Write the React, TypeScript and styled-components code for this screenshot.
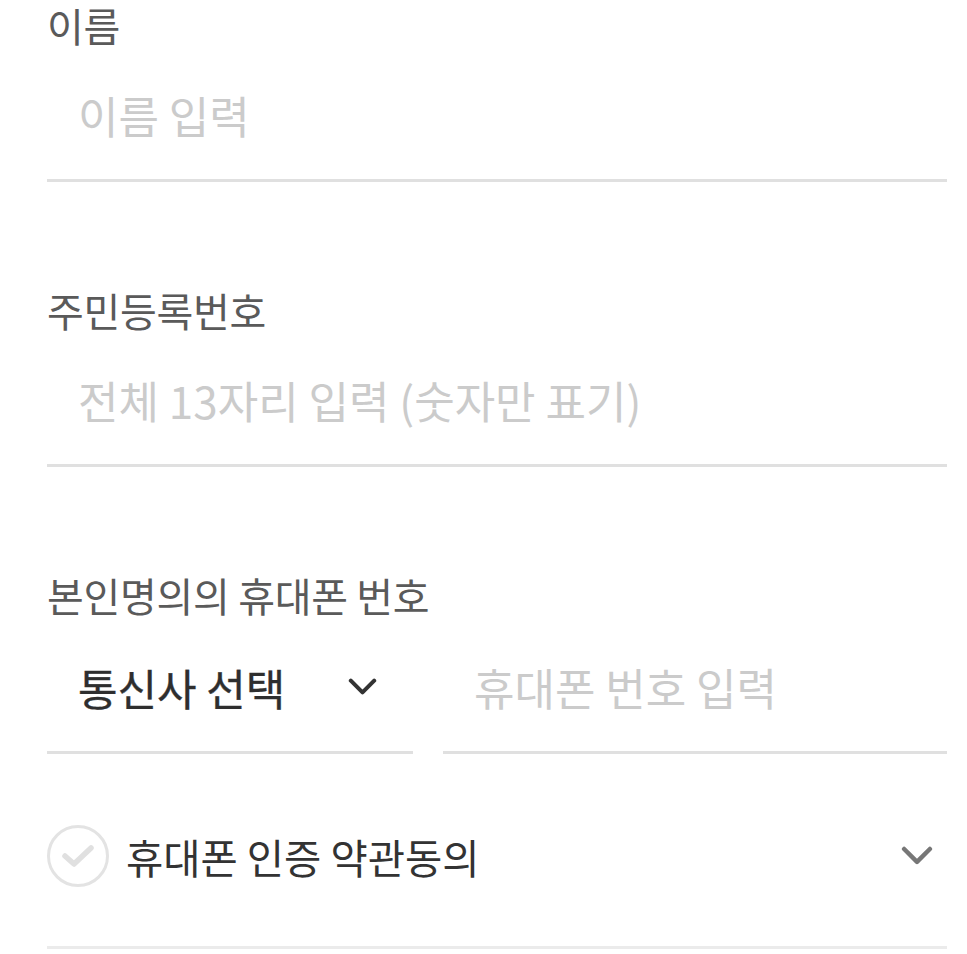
import React from 'react'
import styled, { createGlobalStyle } from 'styled-components'

const GlobalStyle = createGlobalStyle`
  body {
    margin: 0;
    background: #fff;
    font-family: "Noto Sans CJK KR", "Noto Sans", sans-serif;
  }
`

const Form = styled.form`
  padding: 0 20px 0 47px;
`

const Field = styled.div`
  margin-bottom: 103px;
`

const Label = styled.div`
  padding-top: 3px;
  font-size: 40px;
  line-height: 44px;
  color: #5a5a5a;
  letter-spacing: -0.3px;
`

const Underline = styled.div`
  border-bottom: 3px solid #e0e0e0;
`

const TextInput = styled.input`
  display: block;
  width: 100%;
  box-sizing: border-box;
  height: 132px;
  border: none;
  outline: none;
  padding: 4px 0 0 31px;
  font-family: inherit;
  font-size: 44px;
  color: #333;
  background: transparent;

  &::placeholder {
    color: #cbcbcb;
  }
`

const PhoneRow = styled.div`
  display: flex;
  align-items: flex-end;
  gap: 30px;
  padding-top: 2px;
`

const CarrierSelect = styled.div`
  width: 366px;
  height: 135px;
  box-sizing: border-box;
  display: flex;
  align-items: center;
  justify-content: space-between;
  padding: 4px 36px 0 31px;
  border-bottom: 3px solid #e0e0e0;
  font-size: 43px;
  font-weight: 400;
  -webkit-text-stroke: 0.35px #333;
  color: #2e2e2e;
`

const PhoneInput = styled(Underline)`
  flex: 1;
`

const AgreeRow = styled.div`
  height: 195px;
  box-sizing: border-box;
  padding: 12px 14px 0 0;
  display: flex;
  align-items: center;
  border-bottom: 3px solid #ebebeb;
`

const CheckCircle = styled.span`
  width: 62px;
  height: 62px;
  box-sizing: border-box;
  border: 3px solid #e3e3e3;
  border-radius: 50%;
  display: flex;
  align-items: center;
  justify-content: center;
`

const AgreeText = styled.span`
  flex: 1;
  margin-left: 17px;
  font-size: 40.5px;
  color: #333;
`

const Chevron = ({ color, width }: { color: string; width: number }) => (
  <svg width={width} height={width * 0.62} viewBox="0 0 32 20" fill="none">
    <polyline points="3,3 16,16 29,3" stroke={color} strokeWidth="4.5" strokeLinecap="round" strokeLinejoin="round" />
  </svg>
)

const App: React.FC = () => {
  return (
    <>
      <GlobalStyle />
      <Form>
        <Field>
          <Label>이름</Label>
          <Underline>
            <TextInput placeholder="이름 입력" />
          </Underline>
        </Field>

        <Field>
          <Label>주민등록번호</Label>
          <Underline>
            <TextInput placeholder="전체 13자리 입력 (숫자만 표기)" />
          </Underline>
        </Field>

        <div>
          <Label>본인명의의 휴대폰 번호</Label>
          <PhoneRow>
            <CarrierSelect>
              통신사 선택
              <Chevron color="#333" width={29} />
            </CarrierSelect>
            <PhoneInput>
              <TextInput placeholder="휴대폰 번호 입력" />
            </PhoneInput>
          </PhoneRow>
        </div>

        <AgreeRow>
          <CheckCircle>
            <svg width="36" height="28" viewBox="0 0 36 28" fill="none">
              <polyline points="5,14 14,22 31,6" stroke="#e0e0e0" strokeWidth="5.5" strokeLinecap="round" strokeLinejoin="round" />
            </svg>
          </CheckCircle>
          <AgreeText>휴대폰 인증 약관동의</AgreeText>
          <Chevron color="#777" width={32} />
        </AgreeRow>
      </Form>
    </>
  )
}

export default App
